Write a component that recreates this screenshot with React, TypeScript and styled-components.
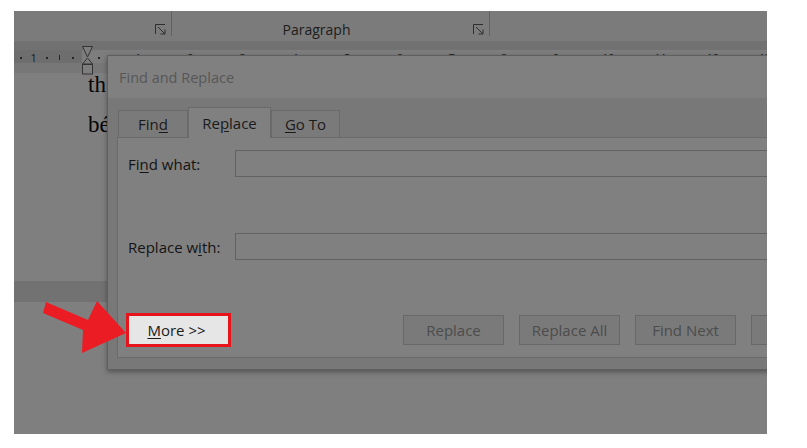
import styled, { createGlobalStyle } from "styled-components";

const GlobalStyle = createGlobalStyle`
  html, body {
    margin: 0;
    background: #ffffff;
  }
  body {
    font-family: "Open Sans", "Noto Sans", sans-serif;
  }
`;

const Screen = styled.div`
  position: relative;
  margin: 11px 0 0 14px;
  width: 753px;
  height: 423px;
  background: #7f7f7f;
  overflow: hidden;
  display: flex;
  flex-direction: column;
`;

const Ribbon = styled.div`
  height: 30px;
  display: flex;
  background: #7b7b7b;
`;

const Group = styled.div<{ $w: number }>`
  width: ${(p) => p.$w}px;
  display: flex;
  align-items: flex-end;
  padding: 0 4px 2px 0;
  box-sizing: border-box;
`;

const GroupLabel = styled.div`
  flex: 1;
  text-align: center;
  font-size: 14px;
  line-height: 18px;
  color: #1c1c1c;
  padding-right: 12px;
`;

const Launcher = styled.svg`
  margin-left: auto;
  margin-bottom: 4px;
  flex: none;
`;

const Separator = styled.div`
  width: 1px;
  height: 25px;
  background: #626262;
`;

const Band = styled.div<{ $h: number; $bg: string }>`
  height: ${(p) => p.$h}px;
  background: ${(p) => p.$bg};
  flex: none;
`;

const Ruler = styled.div`
  height: 13px;
  display: flex;
  background: linear-gradient(to right, #6e6e6e 0 68px, #7d7d7d 68px);
  font-size: 11px;
  line-height: 13px;
  color: #1a1a1a;
`;

const RulerCell = styled.div`
  width: 13.075px;
  flex: none;
  padding-top: 2px;
  box-sizing: border-box;
  display: flex;
  align-items: center;
  justify-content: center;
`;

const Dot = styled.span`
  width: 2px;
  height: 2px;
  background: #262626;
`;

const Tick = styled.span`
  width: 1px;
  height: 5px;
  background: #262626;
`;

const Page = styled.div<{ $grow?: boolean }>`
  height: ${(p) => (p.$grow ? "auto" : "208px")};
  flex: ${(p) => (p.$grow ? 1 : "none")};
  padding-left: 74px;
  display: flex;
  flex-direction: column;
  gap: 16px;
  font-family: "Liberation Serif", "Times New Roman", serif;
  font-size: 23px;
  line-height: 24px;
  color: #050505;
  white-space: nowrap;
`;

const Marker = styled.svg`
  position: absolute;
  left: 68px;
  top: 35px;
`;

const Dialog = styled.div`
  position: absolute;
  left: 93px;
  top: 44px;
  width: 766px;
  height: 315px;
  box-sizing: border-box;
  border: 1px solid #5f5f5f;
  background: #787878;
  box-shadow: 0 2px 5px rgba(0, 0, 0, 0.35);
  display: flex;
  flex-direction: column;
  z-index: 1;
`;

const TitleBar = styled.div`
  height: 42px;
  flex: none;
  background: #808080;
  padding-left: 11px;
  display: flex;
  align-items: center;
  font-size: 14.5px;
  color: #575757;
`;

const Body = styled.div`
  flex: 1;
  padding: 9px 9px 11px 9px;
  display: flex;
  flex-direction: column;
`;

const Tabs = styled.div`
  height: 30px;
  display: flex;
  align-items: flex-end;
  margin-left: 1px;
  position: relative;
  z-index: 1;
`;

const Tab = styled.div<{ $w: number; $active?: boolean }>`
  width: ${(p) => p.$w}px;
  height: ${(p) => (p.$active ? 31 : 27)}px;
  margin-bottom: ${(p) => (p.$active ? -1 : 0)}px;
  box-sizing: border-box;
  border: 1px solid #6a6a6a;
  border-bottom: none;
  background: ${(p) => (p.$active ? "#808080" : "#7a7a7a")};
  display: flex;
  align-items: center;
  justify-content: center;
  font-size: 15px;
  color: #1a1a1a;
`;

const Panel = styled.div`
  flex: 1;
  border: 1px solid #6a6a6a;
  background: #808080;
  padding: 12px 10px;
  display: flex;
  flex-direction: column;
`;

const Row = styled.div<{ $gap?: number }>`
  height: 27px;
  margin-top: ${(p) => p.$gap ?? 0}px;
  display: flex;
  align-items: center;
`;

const Label = styled.div`
  width: 107px;
  flex: none;
  font-size: 15px;
  color: #141414;
`;

const Field = styled.div`
  flex: 1;
  height: 27px;
  box-sizing: border-box;
  border: 1px solid #626262;
  background: #808080;
`;

const ButtonRow = styled.div`
  margin-top: auto;
  display: flex;
  gap: 15px;
`;

const Button = styled.div<{ $push?: boolean }>`
  width: 101px;
  height: 30px;
  box-sizing: border-box;
  border: 1px solid #686868;
  background: #7a7a7a;
  color: #4c4c4c;
  font-size: 15px;
  display: flex;
  align-items: center;
  justify-content: center;
  margin-left: ${(p) => (p.$push ? "auto" : "0")};
`;

const MoreButton = styled(Button)`
  background: #e6e6e6;
  color: #1a1a1a;
  border-color: #bdbdbd;
  outline: 3px solid #e8141c;
  outline-offset: -1px;
  padding-right: 4px;
`;

const Key = styled.span`
  text-decoration: underline;
  text-underline-offset: 2px;
`;

const Arrow = styled.svg`
  position: absolute;
  left: 26px;
  top: 287px;
  z-index: 2;
`;

const rulerMark = (k: number) => {
  if (k === 0) return null;
  if (k % 4 === 0) return Math.abs(k / 4);
  if (Math.abs(k) % 2 === 0) return <Tick />;
  return <Dot />;
};

const LauncherIcon = () => (
  <Launcher width="12" height="11" viewBox="0 0 12 11">
    <path
      d="M0.5 10V0.5H10 M3 3L10 10 M10 5.5V10H5.5"
      fill="none"
      stroke="#2e2e2e"
      strokeWidth="1"
    />
  </Launcher>
);

const ruler = Array.from({ length: 58 }, (_, i) => i - 5);

const App = () => (
  <>
    <GlobalStyle />
    <Screen>
      <Ribbon>
        <Group $w={157}>
          <LauncherIcon />
        </Group>
        <Separator />
        <Group $w={317}>
          <GroupLabel>Paragraph</GroupLabel>
          <LauncherIcon />
        </Group>
        <Separator />
      </Ribbon>
      <Band $h={9} $bg="#717171" />
      <Ruler>
        {ruler.map((k) => (
          <RulerCell key={k}>{rulerMark(k)}</RulerCell>
        ))}
      </Ruler>
      <Band $h={10} $bg="#777777" />
      <Page>
        <div>th</div>
        <div>bé</div>
      </Page>
      <Band $h={21} $bg="#727272" />
      <Page $grow />

      <Marker width="11" height="29" viewBox="0 0 11 29">
        <g fill="#7e7e7e" stroke="#333" strokeWidth="1">
          <polygon points="0.5,0.5 10.5,0.5 5.5,11" />
          <polygon points="5.5,12 10.5,18 0.5,18" />
          <rect x="0.5" y="18.5" width="10" height="9.5" />
        </g>
      </Marker>

      <Dialog>
        <TitleBar>Find and Replace</TitleBar>
        <Body>
          <Tabs>
            <Tab $w={70}>
              <span>
                Fin<Key>d</Key>
              </span>
            </Tab>
            <Tab $w={83} $active>
              <span>
                Re<Key>p</Key>lace
              </span>
            </Tab>
            <Tab $w={69}>
              <span>
                <Key>G</Key>o To
              </span>
            </Tab>
          </Tabs>
          <Panel>
            <Row>
              <Label>
                Fi<Key>n</Key>d what:
              </Label>
              <Field />
            </Row>
            <Row $gap={56}>
              <Label>
                Replace w<Key>i</Key>th:
              </Label>
              <Field />
            </Row>
            <ButtonRow>
              <MoreButton>
                <span>
                  <Key>M</Key>ore &gt;&gt;
                </span>
              </MoreButton>
              <Button $push>Replace</Button>
              <Button>Replace All</Button>
              <Button>Find Next</Button>
              <Button>Cancel</Button>
            </ButtonRow>
          </Panel>
        </Body>
      </Dialog>

      <Arrow width="90" height="60" viewBox="0 0 90 60">
        <polygon
          points="6,4 48,22 57,3 86,35 42,55 43,32 3,15"
          fill="#ec1c24"
        />
      </Arrow>
    </Screen>
  </>
);

export default App;
